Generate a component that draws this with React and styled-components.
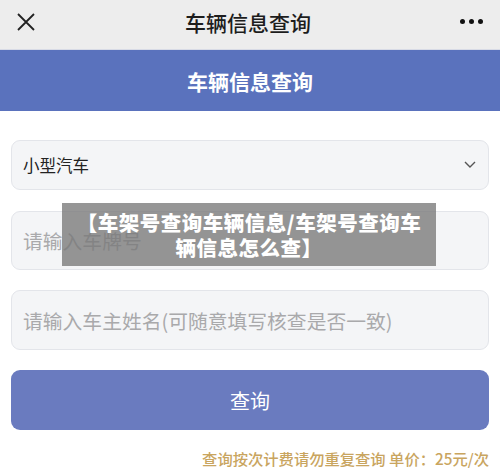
import React from 'react';
import styled, { createGlobalStyle } from 'styled-components';

const GlobalStyle = createGlobalStyle`
  html, body {
    margin: 0;
    padding: 0;
    background: #fff;
    font-family: "Noto Sans CJK SC", "Noto Sans", sans-serif;
  }
`;

const Page = styled.div`
  position: relative;
  width: 500px;
  height: 469px;
  overflow: hidden;
  background: #fff;
`;

const NavBar = styled.div`
  height: 50px;
  display: flex;
  align-items: center;
  justify-content: space-between;
  padding: 0 16px 6px 16px;
  box-sizing: border-box;
  background: #ededed;
  border-bottom: 1px solid #d8dbe6;
`;

const NavTitle = styled.div`
  font-size: 21px;
  color: #1d1d1d;
  font-weight: 500;
`;

const Dots = styled.div`
  display: flex;
  gap: 4px;
  width: 24px;
  span {
    width: 5px;
    height: 5px;
    border-radius: 50%;
    background: #111;
  }
`;

const Banner = styled.div`
  height: 61px;
  display: flex;
  align-items: center;
  justify-content: center;
  background: #5a72bd;
  color: #fff;
  font-size: 21px;
  font-weight: 700;
`;

const Form = styled.div`
  display: flex;
  flex-direction: column;
  padding: 29px 11px 0 11px;
`;

const Field = styled.div`
  height: ${p => p.h}px;
  margin-bottom: ${p => p.mb}px;
  box-sizing: border-box;
  display: flex;
  align-items: center;
  justify-content: space-between;
  padding: 0 12px 0 11px;
  background: #f4f5f7;
  border: 1px solid #e3e5ea;
  border-radius: 9px;
  font-size: ${p => p.fs}px;
  color: ${p => (p.placeholder ? '#a9a9ab' : '#222')};
`;

const SubmitButton = styled.div`
  height: 60px;
  display: flex;
  align-items: center;
  justify-content: center;
  background: #6a7bbf;
  border-radius: 9px;
  color: #fff;
  font-size: 20px;
`;

const Note = styled.div`
  text-align: right;
  margin-top: 18px;
  color: #c9a55f;
  font-size: 15.3px;
  line-height: 20px;
  font-weight: 500;
`;

const Overlay = styled.div`
  position: absolute;
  left: 62px;
  top: 203px;
  width: 374px;
  height: 63px;
  background: rgba(120, 120, 120, 0.78);
  color: #fff;
  font-size: 20.5px;
  font-weight: 900;
  line-height: 25px;
  letter-spacing: 0.5px;
  text-align: center;
  display: flex;
  align-items: center;
  justify-content: center;
`;

const App = () => (
  <>
    <GlobalStyle />
    <Page>
      <NavBar>
        <svg width="20" height="20" viewBox="0 0 20 20">
          <path d="M2 2 L18 18 M18 2 L2 18" stroke="#222" strokeWidth="1.8" fill="none" />
        </svg>
        <NavTitle>车辆信息查询</NavTitle>
        <Dots><span /><span /><span /></Dots>
      </NavBar>
      <Banner>车辆信息查询</Banner>
      <Form>
        <Field h={50} mb={21} fs={16.5}>
          小型汽车
          <svg width="12" height="8" viewBox="0 0 12 8">
            <path d="M1 1 L6 6 L11 1" stroke="#555" strokeWidth="1.4" fill="none" />
          </svg>
        </Field>
        <Field h={59} mb={20} fs={19.8} placeholder>请输入车牌号</Field>
        <Field h={60} mb={20} fs={19.8} placeholder>请输入车主姓名(可随意填写核查是否一致)</Field>
        <SubmitButton>查询</SubmitButton>
        <Note>查询按次计费请勿重复查询 单价：25元/次</Note>
      </Form>
      <Overlay>【车架号查询车辆信息/车架号查询车<br />辆信息怎么查】</Overlay>
    </Page>
  </>
);

export default App;
